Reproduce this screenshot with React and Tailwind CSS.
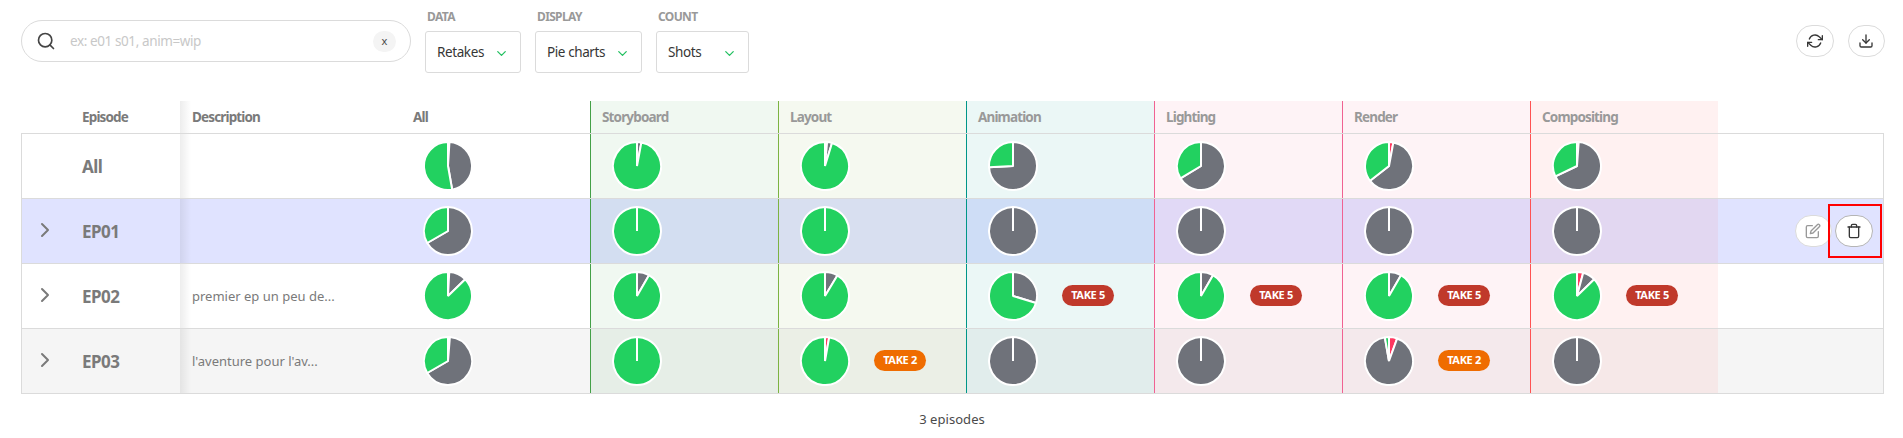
import { FiChevronDown, FiChevronRight, FiDownload, FiEdit, FiRefreshCw, FiSearch, FiTrash } from 'react-icons/fi'

const GREEN = '#22d160'
const GRAY = '#6f727a'
const RED = '#ff3860'

const COLUMNS = [
  { name: 'Storyboard', style: 'border-[#43a047] bg-[#43a047]/8' },
  { name: 'Layout', style: 'border-[#7cb342] bg-[#7cb342]/8' },
  { name: 'Animation', style: 'border-[#009688] bg-[#009688]/8' },
  { name: 'Lighting', style: 'border-[#f06292] bg-[#f06292]/8' },
  { name: 'Render', style: 'border-[#f06292] bg-[#f06292]/8' },
  { name: 'Compositing', style: 'border-[#ff5252] bg-[#ff5252]/8' },
]

// Each chart lists the angles, in degrees, where the red and the gray slices end.
const ROWS = [
  {
    name: 'All',
    description: '',
    all: [3.5, 170],
    style: 'bg-white',
    cells: [{ pie: [0, 10.5] }, { pie: [5, 17] }, { pie: [0, 267] }, { pie: [0, 239] }, { pie: [10.5, 232] }, { pie: [4, 244.5] }],
  },
  {
    name: 'EP01',
    description: '',
    all: [0, 240],
    expandable: true,
    actions: true,
    style: 'bg-[#e0e3ff]',
    cells: [{ pie: [0, 0] }, { pie: [0, 0] }, { pie: [0, 360] }, { pie: [0, 360] }, { pie: [0, 360] }, { pie: [0, 360] }],
  },
  {
    name: 'EP02',
    description: 'premier ep un peu de...',
    all: [3, 46],
    expandable: true,
    style: 'bg-white',
    cells: [
      { pie: [0, 30] },
      { pie: [0, 31] },
      { pie: [0, 107], take: 5 },
      { pie: [0, 30], take: 5 },
      { pie: [0, 30], take: 5 },
      { pie: [15, 46], take: 5 },
    ],
  },
  {
    name: 'EP03',
    description: "l'aventure pour l'av...",
    all: [4.5, 240],
    expandable: true,
    style: 'bg-[#f5f5f5]',
    cells: [
      { pie: [0, 0] },
      { pie: [10, 10], take: 2 },
      { pie: [0, 360] },
      { pie: [0, 360] },
      { pie: [20, 350], take: 2 },
      { pie: [0, 360] },
    ],
  },
]

// Body rows carry a 1px left border, so their first track is 1px narrower.
const HEAD_GRID = 'grid grid-cols-[61px_98px_220px_190px_repeat(6,188px)_1fr]'
const BODY_GRID = 'grid grid-cols-[60px_98px_220px_190px_repeat(6,188px)_1fr]'

function slicePath(from, to) {
  const end = Math.min(to, from + 359.99)
  const point = (deg) => {
    const a = (deg * Math.PI) / 180
    return `${(25 + 24 * Math.sin(a)).toFixed(3)} ${(25 - 24 * Math.cos(a)).toFixed(3)}`
  }
  return `M25 25 L${point(from)} A24 24 0 ${end - from > 180 ? 1 : 0} 1 ${point(end)} Z`
}

function Pie({ ends }) {
  const [red, gray] = ends
  const slices = [
    [0, red, RED],
    [red, gray, GRAY],
    [gray, 360, GREEN],
  ].filter(([a, b]) => b > a)
  return (
    <svg width="50" height="50" viewBox="0 0 50 50" className="block shrink-0">
      {slices.map(([a, b, color]) => (
        <path key={color} d={slicePath(a, b)} fill={color} stroke="#fff" strokeWidth="2" strokeLinejoin="bevel" />
      ))}
    </svg>
  )
}

function Take({ number }) {
  return (
    <span
      className={`mb-px ml-6 flex h-[21px] w-[52px] items-center justify-center rounded-full text-[11px] font-bold tracking-[-0.35px] text-white ${
        number === 5 ? 'bg-[#c0392b]' : 'bg-[#ef6c00]'
      }`}
    >
      TAKE {number}
    </span>
  )
}

function Select({ label, value, width }) {
  return (
    <div className={width}>
      <div className="h-[31px] pt-2 pl-0.5 text-[12px] leading-[18px] font-bold tracking-[-0.65px] text-[#999]">{label}</div>
      <div className="flex h-[42px] items-center justify-between rounded-[3px] border border-[#dbdbdb] px-[11px] text-[#363636]">
        <span className="text-[13.5px] leading-5 tracking-[-0.4px] whitespace-nowrap">{value}</span>
        <FiChevronDown className="mt-0.5 h-[15px] w-[15px] text-[#22c060]" strokeWidth={2} />
      </div>
    </div>
  )
}

function RoundButton({ children, className }) {
  return (
    <button className={`flex h-8 shrink-0 items-center justify-center rounded-full border bg-white ${className}`}>{children}</button>
  )
}

export default function App() {
  return (
    <div className="h-[438px] w-[1903px] overflow-hidden bg-white pl-[21px] font-['Noto_Sans',sans-serif] text-[#7a7a7a]">
      <div className="flex h-[101px] items-start">
        <div className="mt-5 flex h-[42px] w-[390px] items-center rounded-full border border-[#dbdbdb] pr-3.5 pl-[14px]">
          <FiSearch className="h-5 w-5 text-[#444]" strokeWidth={2} />
          <span className="ml-3.5 flex-1 pt-px text-[13.5px] tracking-[-0.4px] text-[#c8c8c8]">ex: e01 s01, anim=wip</span>
          <span className="flex h-[21px] w-[23px] items-center justify-center rounded-full bg-[#f4f4f4] text-[11px] text-[#4a4a4a]">x</span>
        </div>
        <div className="ml-3.5 flex gap-3.5">
          <Select label="DATA" value="Retakes" width="w-24" />
          <Select label="DISPLAY" value="Pie charts" width="w-[107px]" />
          <Select label="COUNT" value="Shots" width="w-[93px]" />
        </div>
        <div className="mt-[25px] mr-[18px] ml-auto flex gap-3.5">
          <RoundButton className="w-[38px] border-[#dbdbdb] pr-px text-[#363636]">
            <FiRefreshCw className="h-4 w-4" />
          </RoundButton>
          <RoundButton className="w-[37px] border-[#dbdbdb] pr-px text-[#363636]">
            <FiDownload className="h-4 w-4" />
          </RoundButton>
        </div>
      </div>

      <div className="w-[1863px]">
        <div className={`h-8 text-[13.5px] font-bold tracking-[-0.85px] ${HEAD_GRID}`}>
          <div />
          <div className="flex items-center">Episode</div>
          <div className="flex items-center bg-linear-to-r from-[#ededed] to-transparent bg-[length:11px_100%] bg-no-repeat pl-3">
            Description
          </div>
          <div className="flex items-center pl-[13px]">All</div>
          {COLUMNS.map((column) => (
            <div key={column.name} className={`flex items-center border-l bg-clip-padding pl-[11px] text-[#999] ${column.style}`}>
              {column.name}
            </div>
          ))}
          <div />
        </div>
        <div className="border-b border-[#dbdbdb]">
          {ROWS.map((row) => (
            <div key={row.name} className={`h-[65px] border-x border-t border-[#dbdbdb] ${BODY_GRID} ${row.style}`}>
              <div className="flex items-center pl-[11px]">
                {row.expandable && <FiChevronRight className="-mt-0.5 h-6 w-6" strokeWidth={2} />}
              </div>
              <div className="flex items-center pt-px text-[17px] font-bold tracking-[-0.5px]">{row.name}</div>
              <div className="flex items-center bg-linear-to-r from-black/7 to-transparent bg-[length:11px_100%] bg-no-repeat pt-0.5 pl-3 text-[13px]">
                {row.description}
              </div>
              <div className="flex items-center pl-[23px]">
                <Pie ends={row.all} />
              </div>
              {row.cells.map((cell, i) => (
                <div key={i} className={`flex items-center border-l bg-clip-padding pl-[21px] ${COLUMNS[i].style}`}>
                  <Pie ends={cell.pie} />
                  {cell.take && <Take number={cell.take} />}
                </div>
              ))}
              <div className="flex items-center justify-end">
                {row.actions && (
                  <>
                    <RoundButton className="-mr-1 w-[37px] border-[#dbdbdb] pr-0.5 text-[#999]">
                      <FiEdit className="h-4 w-4" />
                    </RoundButton>
                    <div className="relative mr-px flex h-[54px] w-[54px] items-center justify-center border-2 border-[#ff0000] pr-0.5">
                      <RoundButton className="w-[38px] border-[#b5b5b5] pr-px text-[#363636]">
                        <FiTrash className="h-4 w-4" />
                      </RoundButton>
                    </div>
                  </>
                )}
              </div>
            </div>
          ))}
        </div>
      </div>
      <div className="mt-[15px] -ml-5 text-center text-[13px] leading-5 tracking-[0.05px] text-[#4a4a4a]">3 episodes</div>
    </div>
  )
}
